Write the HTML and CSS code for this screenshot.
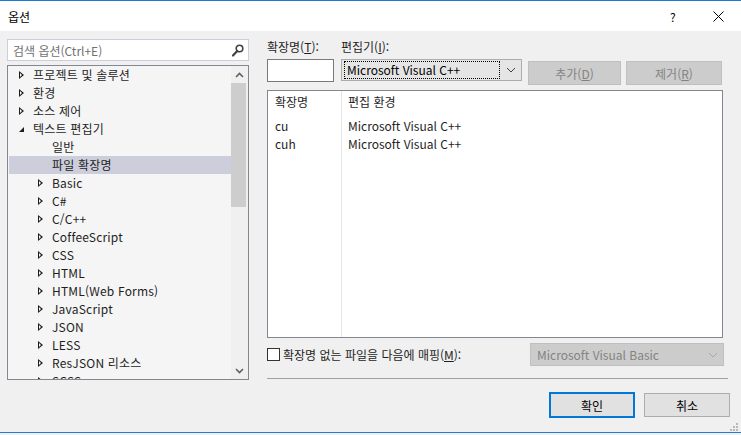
FILE: index.html
```html
<!DOCTYPE html>
<html lang="ko">
<head>
    <meta charset="UTF-8">
    <title>옵션</title>
    <link rel="stylesheet" href="styles.css">
</head>
<body>
<div class="window">

    <!-- Title bar -->
    <div class="titlebar">
        <span class="title">옵션</span>
        <span class="help">?</span>
        <span class="close">
            <svg width="11" height="11" viewBox="0 0 11 11"><path d="M0.5 0.5 L10.5 10.5 M10.5 0.5 L0.5 10.5" stroke="#000" stroke-width="1" fill="none"/></svg>
        </span>
    </div>

    <div class="body">

        <!-- Left: search + tree -->
        <div class="left">
            <div class="search">
                <span class="search-text">검색 옵션(Ctrl+E)</span>
                <svg class="search-icon" width="12" height="13" viewBox="0 0 12 13">
                    <circle cx="7.5" cy="4.5" r="3.3" stroke="#424242" stroke-width="1.6" fill="none"/>
                    <path d="M5.2 7 L1 11.5" stroke="#424242" stroke-width="2.2" stroke-linecap="round"/>
                </svg>
            </div>
            <div class="tree">
                <div class="tree-rows">
                    <div class="row lv0"><span class="arrow closed"></span>프로젝트 및 솔루션</div>
                    <div class="row lv0"><span class="arrow closed"></span>환경</div>
                    <div class="row lv0"><span class="arrow closed"></span>소스 제어</div>
                    <div class="row lv0"><span class="arrow open"></span>텍스트 편집기</div>
                    <div class="row lv1"><span class="arrow"></span>일반</div>
                    <div class="row lv1 selected"><span class="arrow"></span>파일 확장명</div>
                    <div class="row lv1"><span class="arrow closed"></span>Basic</div>
                    <div class="row lv1"><span class="arrow closed"></span>C#</div>
                    <div class="row lv1"><span class="arrow closed"></span>C/C++</div>
                    <div class="row lv1"><span class="arrow closed"></span>CoffeeScript</div>
                    <div class="row lv1"><span class="arrow closed"></span>CSS</div>
                    <div class="row lv1"><span class="arrow closed"></span>HTML</div>
                    <div class="row lv1"><span class="arrow closed"></span>HTML(Web Forms)</div>
                    <div class="row lv1"><span class="arrow closed"></span>JavaScript</div>
                    <div class="row lv1"><span class="arrow closed"></span>JSON</div>
                    <div class="row lv1"><span class="arrow closed"></span>LESS</div>
                    <div class="row lv1"><span class="arrow closed"></span>ResJSON 리소스</div>
                    <div class="row lv1"><span class="arrow closed"></span>SCSS</div>
                </div>
                <div class="scrollbar">
                    <div class="sb-btn">
                        <svg width="9" height="6" viewBox="0 0 9 6"><path d="M1 5 L4.5 1.5 L8 5" stroke="#606060" stroke-width="1.6" fill="none"/></svg>
                    </div>
                    <div class="sb-track"><div class="sb-thumb"></div></div>
                    <div class="sb-btn">
                        <svg width="9" height="6" viewBox="0 0 9 6"><path d="M1 1 L4.5 4.5 L8 1" stroke="#606060" stroke-width="1.6" fill="none"/></svg>
                    </div>
                </div>
            </div>
        </div>

        <!-- Right: extension settings -->
        <div class="right">
            <div class="field-row">
                <div class="field ext">
                    <label>확장명(<u>T</u>):</label>
                    <div class="textbox"></div>
                </div>
                <div class="field editor">
                    <label>편집기(<u>I</u>):</label>
                    <div class="combo">
                        <span class="combo-value">Microsoft Visual C++</span>
                        <svg class="chev" width="10" height="6" viewBox="0 0 10 6"><path d="M1 1 L5 5 L9 1" stroke="#404040" stroke-width="1" fill="none"/></svg>
                    </div>
                </div>
                <button class="btn disabled add">추가(<u>D</u>)</button>
                <button class="btn disabled remove">제거(<u>R</u>)</button>
            </div>

            <div class="listview">
                <div class="lv-col c1">
                    <div class="lv-head">확장명</div>
                    <div class="lv-cell">cu</div>
                    <div class="lv-cell">cuh</div>
                </div>
                <div class="lv-col c2">
                    <div class="lv-head">편집 환경</div>
                    <div class="lv-cell">Microsoft Visual C++</div>
                    <div class="lv-cell">Microsoft Visual C++</div>
                </div>
            </div>

            <div class="map-row">
                <span class="checkbox"></span>
                <span class="map-label">확장명 없는 파일을 다음에 매핑(<u>M</u>):</span>
                <div class="combo off">
                    <span class="combo-value">Microsoft Visual Basic</span>
                    <svg class="chev" width="10" height="6" viewBox="0 0 10 6"><path d="M1 1 L5 5 L9 1" stroke="#a8a8a8" stroke-width="1" fill="none"/></svg>
                </div>
            </div>

            <div class="separator"></div>

            <div class="buttons">
                <button class="btn ok">확인</button>
                <button class="btn">취소</button>
            </div>
        </div>
    </div>

    <svg class="grip" width="9" height="9" viewBox="0 0 9 9">
        <rect x="7" y="1" width="2" height="2" fill="#b8b8b8"/>
        <rect x="4" y="4" width="2" height="2" fill="#b8b8b8"/>
        <rect x="7" y="4" width="2" height="2" fill="#b8b8b8"/>
        <rect x="1" y="7" width="2" height="2" fill="#b8b8b8"/>
        <rect x="4" y="7" width="2" height="2" fill="#b8b8b8"/>
        <rect x="7" y="7" width="2" height="2" fill="#b8b8b8"/>
    </svg>
</div>
</body>
</html>
```

FILE: styles.css
```css
/* Dialog base */
body {
    margin: 0;
    background: #f0f0f0;
    font-family: "Noto Sans CJK KR", sans-serif;
    font-size: 12px;
    color: #1e1e1e;
}
.window {
    position: relative;
    width: 741px;
    height: 433px;
    border-top: 1px solid #1c7ad4;
    border-bottom: 1px solid #2b7cc8;
    background: #f0f0f0;
    box-sizing: border-box;
    overflow: hidden;
}
button {
    font-family: inherit;
    font-size: 12px;
}

/* Title bar */
.titlebar {
    height: 30px;
    background: #ffffff;
    display: flex;
    align-items: center;
    padding-left: 8px;
}
.title {
    flex: 1;
    color: #000;
}
.help {
    width: 20px;
    color: #000;
    margin-right: 23px;
}
.close {
    width: 28px;
    display: flex;
}

/* Layout */
.body {
    display: flex;
    padding-top: 8px;
}
.left {
    width: 242px;
    margin-left: 7px;
}
.right {
    width: 463px;
    margin-left: 18px;
    display: flex;
    flex-direction: column;
}

/* Search box */
.search {
    height: 22px;
    box-sizing: border-box;
    border: 1px solid #cccedb;
    background: #fff;
    display: flex;
    align-items: center;
    padding: 0 4px 0 5px;
}
.search-text {
    flex: 1;
    color: #717171;
}
.search-icon {
    margin-top: 1px;
}

/* Tree */
.tree {
    margin-top: 4px;
    height: 315px;
    box-sizing: border-box;
    border: 1px solid #828790;
    background: #f5f5f5;
    display: flex;
    overflow: hidden;
}
.tree-rows {
    flex: 1;
    letter-spacing: 0.2px;
}
.row {
    height: 18px;
    line-height: 18px;
    display: flex;
    align-items: center;
    white-space: nowrap;
}
.row.lv0 { padding-left: 10px; }
.row.lv1 { padding-left: 29px; }
.row.selected {
    background: #cccedb;
    margin-left: 1px;
    padding-left: 28px;
}
.arrow {
    width: 15px;
    height: 18px;
    display: inline-block;
    position: relative;
    flex: none;
}
.arrow.closed::before {
    content: "";
    position: absolute;
    left: 1px;
    top: 5px;
    width: 0;
    height: 0;
    border-top: 4px solid transparent;
    border-bottom: 4px solid transparent;
    border-left: 5px solid #1e1e1e;
}
.arrow.closed::after {
    content: "";
    position: absolute;
    left: 2px;
    top: 7px;
    width: 0;
    height: 0;
    border-top: 2px solid transparent;
    border-bottom: 2px solid transparent;
    border-left: 2px solid #f5f5f5;
}
.arrow.open::before {
    content: "";
    position: absolute;
    left: 1px;
    top: 7px;
    width: 0;
    height: 0;
    border-left: 5px solid transparent;
    border-bottom: 5px solid #1e1e1e;
}

/* Scrollbar */
.scrollbar {
    width: 17px;
    background: #f0f0f0;
    display: flex;
    flex-direction: column;
}
.sb-btn {
    height: 17px;
    display: flex;
    align-items: center;
    justify-content: center;
}
.sb-track {
    flex: 1;
}
.sb-thumb {
    margin: 0 2px 0 0;
    height: 124px;
    background: #cdcdcd;
}

/* Right side fields */
.field-row {
    display: flex;
    align-items: flex-end;
}
.field label {
    display: block;
    height: 16px;
    line-height: 16px;
    margin-bottom: 4px;
}
.field.ext {
    width: 67px;
    margin-right: 7px;
}
.textbox {
    height: 23px;
    box-sizing: border-box;
    border: 1px solid #7a7a7a;
    background: #fff;
}
.field.editor {
    width: 181px;
}
.combo {
    height: 22px;
    box-sizing: border-box;
    border: 1px solid #adadad;
    background: #e5e5e5;
    display: flex;
    align-items: center;
    padding: 2px 4px 2px 2px;
    margin-bottom: 1px;
}
.combo-value {
    flex: 1;
    height: 16px;
    line-height: 16px;
    padding-left: 2px;
    margin-right: 6px;
    border: 1px dotted #000;
    color: #000;
}
.chev {
    flex: none;
    margin-right: 1px;
}
.btn {
    height: 24px;
    box-sizing: border-box;
    border: 1px solid #adadad;
    background: #e1e1e1;
    color: #000;
    padding: 0;
}
.btn.disabled {
    border-color: #bfbfbf;
    background: #cccccc;
    color: #838383;
}
.btn.add {
    width: 93px;
    margin-left: 6px;
    margin-bottom: -3px;
}
.btn.remove {
    width: 96px;
    margin-left: 5px;
    margin-bottom: -3px;
}

/* List view */
.listview {
    margin-top: 8px;
    width: 456px;
    height: 248px;
    box-sizing: border-box;
    border: 1px solid #828790;
    background: #fff;
    display: flex;
}
.lv-col {
    box-sizing: border-box;
}
.lv-col.c1 {
    width: 74px;
    border-right: 1px solid #e5e5e5;
    padding-left: 7px;
}
.lv-col.c2 {
    flex: 1;
    padding-left: 6px;
}
.lv-head {
    height: 18px;
    line-height: 18px;
    margin-top: 2px;
    margin-bottom: 6px;
}
.lv-cell {
    height: 18px;
    line-height: 18px;
}

/* Map row */
.map-row {
    margin-top: 5px;
    display: flex;
    align-items: center;
    height: 23px;
}
.checkbox {
    width: 13px;
    height: 13px;
    box-sizing: border-box;
    border: 1px solid #333;
    background: #fff;
    margin-right: 3px;
}
.map-label {
    flex: 1;
}
.combo.off {
    width: 194px;
    height: 23px;
    margin: 0 6px 0 0;
    background: #cccccc;
    border-color: #bfbfbf;
    padding-left: 4px;
}
.combo.off .combo-value {
    border: none;
    color: #838383;
}

.separator {
    margin-top: 12px;
    width: 461px;
    height: 1px;
    background: #a0a0a0;
}

/* Dialog buttons */
.buttons {
    margin-top: 13px;
    display: flex;
    justify-content: flex-end;
    gap: 9px;
}
.buttons .btn {
    width: 86px;
    height: 24px;
    margin-top: 1px;
}
.buttons .btn.ok {
    height: 26px;
    margin-top: 0;
    border: 2px solid #0078d7;
}

.grip {
    position: absolute;
    right: 3px;
    bottom: 1px;
}
```
